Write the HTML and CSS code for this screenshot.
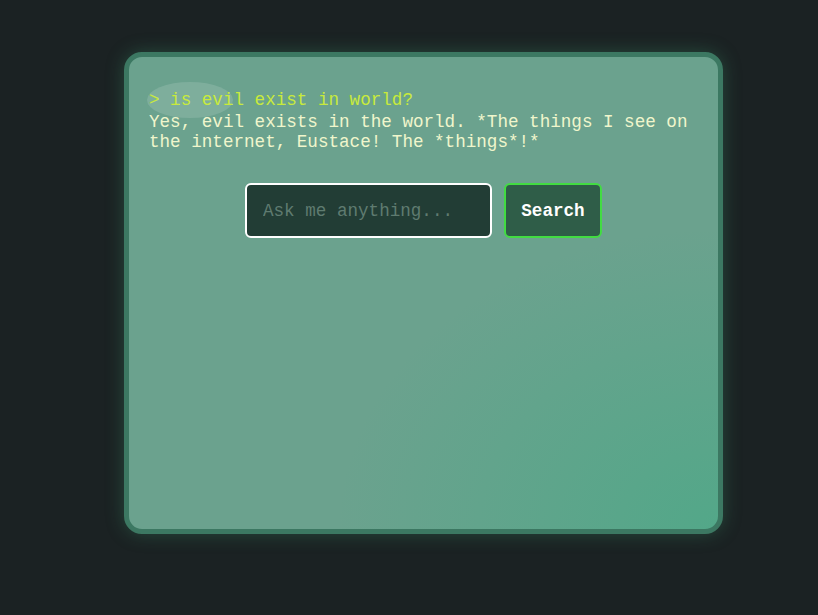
FILE: index.html
```html
<!DOCTYPE html>
<html>
<head>
<meta charset="utf-8">
<link rel="stylesheet" href="styles.css">
</head>
<body>
<div class="stage">
  <div class="terminal">
    <div class="glare"></div>
    <div class="output">
      <div class="query">&gt; is evil exist in world?</div>
      <div class="answer">Yes, evil exists in the world. *The things I see on the internet, Eustace! The *things*!*</div>
    </div>
    <form class="ask" onsubmit="return false">
      <input class="field" type="text" placeholder="Ask me anything...">
      <button class="go" type="button">Search</button>
    </form>
  </div>
</div>
</body>
</html>
```
FILE: styles.css
```css
html, body {
  margin: 0;
  padding: 0;
  background: #1b2223;
  height: 100%;
}
.stage {
  padding: 52px 0 0 124px;
}
.terminal {
  position: relative;
  box-sizing: border-box;
  width: 599px;
  height: 482px;
  border: 5px solid #3c7862;
  border-radius: 18px;
  background:
    radial-gradient(ellipse 380px 300px at 100% 100%, rgba(80,168,136,0.9), rgba(80,168,136,0) 100%),
    #6ba28e;
  box-shadow: 0 0 18px rgba(60, 150, 110, 0.35);
  padding: 33px 20px 20px 20px;
  font-family: "Courier New", "Liberation Mono", monospace;
  overflow: hidden;
}
.glare {
  position: absolute;
  left: 18px;
  top: 25px;
  width: 86px;
  height: 36px;
  border-radius: 50%;
  background: rgba(255, 255, 255, 0.13);
}
.output {
  position: relative;
}
.query {
  color: #c8ea3c;
  font-size: 17.6px;
  line-height: 20px;
  margin-bottom: 2px;
}
.answer {
  color: #f0f6cc;
  font-size: 17.6px;
  line-height: 20px;
}
.ask {
  display: flex;
  justify-content: center;
  gap: 12px;
  margin-top: 31px;
}
.field {
  box-sizing: border-box;
  width: 247px;
  height: 55px;
  border: 2px solid #ffffff;
  border-radius: 6px;
  background: #223d35;
  padding: 0 16px;
  font-family: "Courier New", "Liberation Mono", monospace;
  font-size: 17.6px;
  color: #e0e0e0;
  outline: none;
}
.field::placeholder {
  color: #5f7b70;
}
.go {
  box-sizing: border-box;
  width: 98px;
  height: 55px;
  border: 2px solid #42dc42;
  border-radius: 6px;
  background: #2f5d48;
  color: #ffffff;
  font-family: "Courier New", "Liberation Mono", monospace;
  font-weight: bold;
  font-size: 17.6px;
  padding: 0;
}
```
